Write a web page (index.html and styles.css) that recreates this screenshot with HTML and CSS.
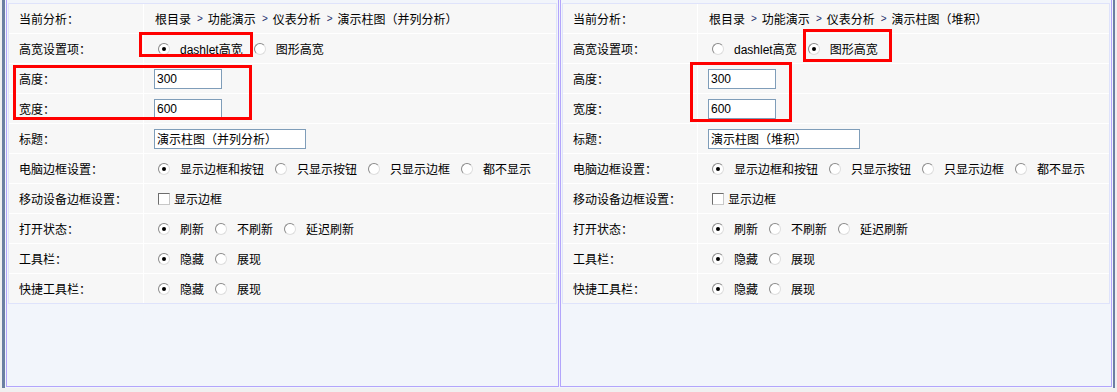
FILE: index.html
```html
<!DOCTYPE html>
<html lang="zh-CN">
<head>
  <meta charset="UTF-8" />
  <title>柱图设置</title>
  <link rel="stylesheet" href="styles.css">
</head>
<body>
  <div class="frame">
    <!-- 左侧：并列分析 -->
    <div class="panel">
      <div class="form">
        <div class="row">
          <div class="label">当前分析：</div>
          <div class="value path">
            <span>根目录</span><span class="sep">&gt;</span><span>功能演示</span><span class="sep">&gt;</span><span>仪表分析</span><span class="sep">&gt;</span><span>演示柱图（并列分析）</span>
          </div>
        </div>
        <div class="row">
          <div class="label">高宽设置项：</div>
          <div class="value">
            <span class="opt"><i class="radio on"></i>dashlet高宽</span>
            <span class="opt"><i class="radio"></i>图形高宽</span>
          </div>
        </div>
        <div class="row">
          <div class="label">高度：</div>
          <div class="value"><input class="field" value="300"></div>
        </div>
        <div class="row">
          <div class="label">宽度：</div>
          <div class="value"><input class="field" value="600"></div>
        </div>
        <div class="row">
          <div class="label">标题：</div>
          <div class="value"><input class="field wide" value="演示柱图（并列分析）"></div>
        </div>
        <div class="row">
          <div class="label">电脑边框设置：</div>
          <div class="value">
            <span class="opt"><i class="radio on"></i>显示边框和按钮</span>
            <span class="opt"><i class="radio"></i>只显示按钮</span>
            <span class="opt"><i class="radio"></i>只显示边框</span>
            <span class="opt"><i class="radio"></i>都不显示</span>
          </div>
        </div>
        <div class="row">
          <div class="label">移动设备边框设置：</div>
          <div class="value"><span class="opt"><i class="check"></i>显示边框</span></div>
        </div>
        <div class="row">
          <div class="label">打开状态：</div>
          <div class="value">
            <span class="opt"><i class="radio on"></i>刷新</span>
            <span class="opt"><i class="radio"></i>不刷新</span>
            <span class="opt"><i class="radio"></i>延迟刷新</span>
          </div>
        </div>
        <div class="row">
          <div class="label">工具栏：</div>
          <div class="value">
            <span class="opt"><i class="radio on"></i>隐藏</span>
            <span class="opt"><i class="radio"></i>展现</span>
          </div>
        </div>
        <div class="row">
          <div class="label">快捷工具栏：</div>
          <div class="value">
            <span class="opt"><i class="radio on"></i>隐藏</span>
            <span class="opt"><i class="radio"></i>展现</span>
          </div>
        </div>
      </div>
      <div class="mark mark-a"></div>
      <div class="mark mark-b"></div>
    </div>

    <!-- 右侧：堆积 -->
    <div class="panel">
      <div class="form">
        <div class="row">
          <div class="label">当前分析：</div>
          <div class="value path">
            <span>根目录</span><span class="sep">&gt;</span><span>功能演示</span><span class="sep">&gt;</span><span>仪表分析</span><span class="sep">&gt;</span><span>演示柱图（堆积）</span>
          </div>
        </div>
        <div class="row">
          <div class="label">高宽设置项：</div>
          <div class="value">
            <span class="opt"><i class="radio"></i>dashlet高宽</span>
            <span class="opt"><i class="radio on"></i>图形高宽</span>
          </div>
        </div>
        <div class="row">
          <div class="label">高度：</div>
          <div class="value"><input class="field" value="300"></div>
        </div>
        <div class="row">
          <div class="label">宽度：</div>
          <div class="value"><input class="field" value="600"></div>
        </div>
        <div class="row">
          <div class="label">标题：</div>
          <div class="value"><input class="field wide" value="演示柱图（堆积）"></div>
        </div>
        <div class="row">
          <div class="label">电脑边框设置：</div>
          <div class="value">
            <span class="opt"><i class="radio on"></i>显示边框和按钮</span>
            <span class="opt"><i class="radio"></i>只显示按钮</span>
            <span class="opt"><i class="radio"></i>只显示边框</span>
            <span class="opt"><i class="radio"></i>都不显示</span>
          </div>
        </div>
        <div class="row">
          <div class="label">移动设备边框设置：</div>
          <div class="value"><span class="opt"><i class="check"></i>显示边框</span></div>
        </div>
        <div class="row">
          <div class="label">打开状态：</div>
          <div class="value">
            <span class="opt"><i class="radio on"></i>刷新</span>
            <span class="opt"><i class="radio"></i>不刷新</span>
            <span class="opt"><i class="radio"></i>延迟刷新</span>
          </div>
        </div>
        <div class="row">
          <div class="label">工具栏：</div>
          <div class="value">
            <span class="opt"><i class="radio on"></i>隐藏</span>
            <span class="opt"><i class="radio"></i>展现</span>
          </div>
        </div>
        <div class="row">
          <div class="label">快捷工具栏：</div>
          <div class="value">
            <span class="opt"><i class="radio on"></i>隐藏</span>
            <span class="opt"><i class="radio"></i>展现</span>
          </div>
        </div>
      </div>
      <div class="mark mark-c"></div>
      <div class="mark mark-d"></div>
    </div>
  </div>
</body>
</html>
```

FILE: styles.css
```css
body {
  margin: 0;
  background: #f0f0f0;
  font-family: "Liberation Sans", "Noto Sans CJK SC", sans-serif;
  font-size: 12px;
  color: #000;
}
.frame {
  display: flex;
  gap: 1px;
  margin-left: 2px;
  width: 1113px;
  height: 388px;
  box-sizing: border-box;
  border-left: 3px solid #6b7fa2;
  border-right: 2px solid #6b7fa2;
  padding: 0 1px 1px 1px;
  background: #f2f5fb;
}
.panel {
  position: relative;
  flex: 0 0 553px;
  box-sizing: border-box;
  border: 1px solid #b3a5fb;
  border-top: 0;
  padding: 3px 1px 0;
  background: #f2f5fb;
}
.panel + .panel {
  flex-basis: 552px;
}
.form {
  border: 1px solid #dfe3fb;
  background: #f7f7f7;
}
.row {
  display: flex;
  height: 30px;
  box-sizing: border-box;
  border-bottom: 1px solid #fff;
}
.row:last-child {
  height: 29px;
  border-bottom: 0;
}
.label {
  flex: 0 0 135px;
  box-sizing: border-box;
  border-right: 1px solid #fff;
  padding-left: 10px;
  display: flex;
  align-items: center;
  white-space: nowrap;
}
.value {
  flex: 1;
  display: flex;
  align-items: center;
  padding-left: 10px;
  white-space: nowrap;
}
.path {
  padding-left: 11px;
}
.sep {
  margin: 0 5px 0 6px;
  font-size: 10px;
  color: #1c2d6b;
}
.opt {
  display: flex;
  align-items: center;
  margin-right: 7px;
}
.radio {
  position: relative;
  flex: none;
  width: 12px;
  height: 12px;
  box-sizing: border-box;
  margin: 0 10px 0 4px;
  border-radius: 50%;
  border: 1px solid;
  border-color: #8a8a8a #dedede #dedede #8a8a8a;
  background: #fff;
}
.radio.on::after {
  content: "";
  position: absolute;
  left: 3px;
  top: 3px;
  width: 4px;
  height: 4px;
  border-radius: 50%;
  background: #000;
}
.check {
  flex: none;
  width: 12px;
  height: 12px;
  box-sizing: border-box;
  margin: 0 4px 0 4px;
  border: 1px solid;
  border-color: #6d6d6d #c8c8c8 #c8c8c8 #6d6d6d;
  background: #fff;
}
.field {
  width: 68px;
  height: 20px;
  box-sizing: border-box;
  margin: 0;
  padding: 0 2px;
  border: 1px solid #7f9db9;
  background: #fff;
  font: inherit;
  color: #000;
}
.field.wide {
  width: 152px;
}
.mark {
  position: absolute;
  box-sizing: border-box;
  border: 3px solid #f00;
}
.mark-a {
  left: 132px;
  top: 32px;
  width: 114px;
  height: 25px;
}
.mark-b {
  left: 6px;
  top: 65px;
  width: 239px;
  height: 55px;
}
.mark-c {
  left: 242px;
  top: 29px;
  width: 89px;
  height: 33px;
}
.mark-d {
  left: 129px;
  top: 62px;
  width: 102px;
  height: 60px;
}
```
